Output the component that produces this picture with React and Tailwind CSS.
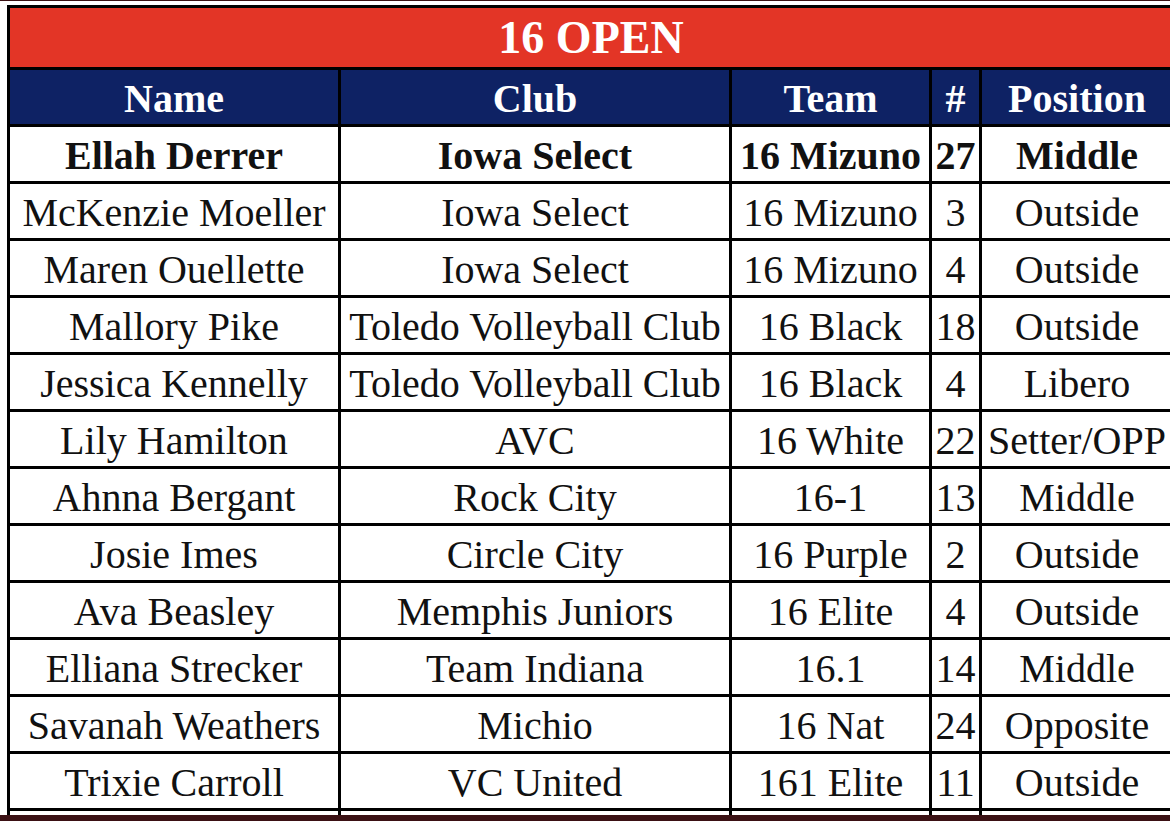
import React from "react";

const players = [
  ["Ellah Derrer", "Iowa Select", "16 Mizuno", "27", "Middle"],
  ["McKenzie Moeller", "Iowa Select", "16 Mizuno", "3", "Outside"],
  ["Maren Ouellette", "Iowa Select", "16 Mizuno", "4", "Outside"],
  ["Mallory Pike", "Toledo Volleyball Club", "16 Black", "18", "Outside"],
  ["Jessica Kennelly", "Toledo Volleyball Club", "16 Black", "4", "Libero"],
  ["Lily Hamilton", "AVC", "16 White", "22", "Setter/OPP"],
  ["Ahnna Bergant", "Rock City", "16-1", "13", "Middle"],
  ["Josie Imes", "Circle City", "16 Purple", "2", "Outside"],
  ["Ava Beasley", "Memphis Juniors", "16 Elite", "4", "Outside"],
  ["Elliana Strecker", "Team Indiana", "16.1", "14", "Middle"],
  ["Savanah Weathers", "Michio", "16 Nat", "24", "Opposite"],
  ["Trixie Carroll", "VC United", "161 Elite", "11", "Outside"],
  ["", "", "", "", ""],
];

const headers = ["Name", "Club", "Team", "#", "Position"];

export default function App() {
  return (
    <div className="w-[1170px] h-[821px] bg-white overflow-hidden flex flex-col" style={{ fontFamily: '"Liberation Serif", "Times New Roman", serif' }}>
      <div className="h-[815px] flex-none overflow-hidden border-t border-[#3b1114] pt-[4px] pl-[7px]">
        <div className="w-[1168px] grid grid-cols-[328px_388px_197px_47px_190px] gap-[3px] p-[3px] bg-black">
          {/* title */}
          <div className="col-span-5 h-[59px] bg-[#e33526] flex items-center justify-center text-white font-bold text-[46px] leading-none pt-[1px]">
            16 OPEN
          </div>

          {headers.map((h) => (
            <div key={h} className="h-[54px] bg-[#0e2264] flex items-center justify-center text-white font-bold text-[40px] leading-none pt-[4px]">
              {h}
            </div>
          ))}

          {players.map((row, i) =>
            row.map((cell, j) => (
              <div
                key={`${i}-${j}`}
                className={`h-[54px] bg-white flex items-center justify-center whitespace-nowrap overflow-hidden text-[40px] leading-none pt-[4px] text-[#111] ${i === 0 ? "font-bold" : ""}`}
              >
                {cell}
              </div>
            ))
          )}
        </div>
      </div>
      <div className="flex-1 bg-[#3b1114]"></div>
    </div>
  );
}
